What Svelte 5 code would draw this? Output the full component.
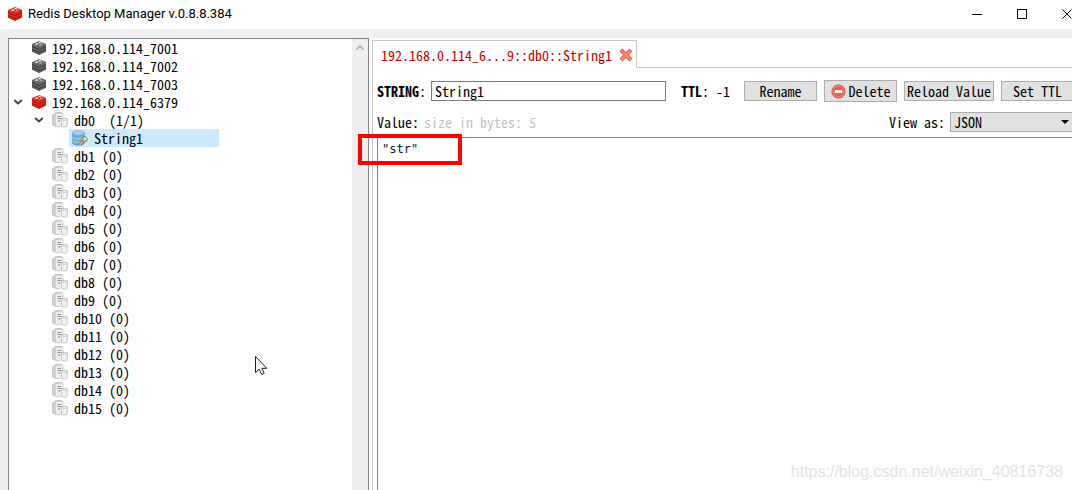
<script>
  const servers = ['192.168.0.114_7001', '192.168.0.114_7002', '192.168.0.114_7003'];
  const databases = Array.from({ length: 15 }, (_, i) => `db${i + 1} (0)`);
  let keyName = $state('String1');
  let value = $state('"str"');
  let view = $state('JSON');
</script>

{#snippet cube(dark, mid, light)}
  <svg class="icon" viewBox="0 0 16 16" aria-hidden="true">
    <path d="M1 4.500 8 7.500l7-3v7L8 15l-7-3.500z" fill={dark} />
    <path d="M1 4 8 1l7 3v2L8 9 1 6z" fill={mid} />
    <path d="M1 7.300 8 10.300l7-3v1.700L8 12 1 9zM1 10.300l7 3 7-3v1.200L8 14.700l-7-3.200z" fill={mid} />
    <path d="m3.500 4.300 2.500-1.200 2 1-2.500 1.200z" fill={light} />
    <path d="m7 2.500 1.800-.7.700.6 1.500.3-1.800.8z" fill="#fff" />
    <path d="m8.500 5.400 3-1.200" stroke={light} stroke-width=".8" />
  </svg>
{/snippet}

{#snippet dbIcon()}
  <svg class="icon" viewBox="0 0 16 16" aria-hidden="true">
    <path d="M.500 3 3.500.500H10l1 1V13l-6 2-4.500-2z" fill="#d0d0d0" stroke="#b0b0b0" stroke-width=".6" />
    <path d="M4 2.300 10.700 1.500V13.300L4 14.500z" fill="#eee" />
    <path d="M5.300 4.500h4M5.300 6.500h4" stroke="#8c8c8c" stroke-width=".9" />
    <path d="M6.500 8.300H8v1.500H6.500z" fill="#60b557" />
    <path d="m9.300 7.500.5 7q2.800 1.400 5.200 0l.5-7z" fill="#f8f8f8" stroke="#b2b2b2" stroke-width=".7" />
    <ellipse cx="12.400" cy="7.300" rx="3.200" ry="1" fill="#fff" stroke="#a4a4a4" stroke-width=".7" />
    <path d="M11.500 10v3.500M13.500 10v3.500" stroke="#dcdcdc" stroke-width=".7" />
  </svg>
{/snippet}

{#snippet chevron()}
  <svg class="chevron" viewBox="0 0 10 10" aria-hidden="true"><path d="m1.200 3 3.800 3.500L8.800 3" fill="none" stroke="#404040" stroke-width="1.800" /></svg>
{/snippet}

<div class="window">
  <header>
    {@render cube('#a51612', '#da2b24', '#ffd5cf')}
    <h1>Redis Desktop Manager v.0.8.8.384</h1>
    <div class="controls">
      <button aria-label="Minimize"><svg viewBox="0 0 12 12"><path d="M1 6.500h10" /></svg></button>
      <button aria-label="Maximize"><svg viewBox="0 0 12 12"><path d="M1.500 1.500h9v9h-9z" /></svg></button>
      <button aria-label="Close"><svg viewBox="0 0 12 12"><path d="m1.500 1.500 9 9m0-9-9 9" /></svg></button>
    </div>
  </header>

  <main>
    <aside>
      <ul>
        {#each servers as server}
          <li class="server"><span class="toggle"></span>{@render cube('#3d3d3d', '#666', '#ddd')}<span>{server}</span></li>
        {/each}
        <li class="server"><span class="toggle">{@render chevron()}</span>{@render cube('#b51612', '#da241f', '#ffd5cf')}<span>192.168.0.114_6379</span></li>
        <li class="database"><span class="toggle">{@render chevron()}</span>{@render dbIcon()}<span class="name">db0  (1/1)</span></li>
        <li class="key">
          <div class="selected">
            <svg class="icon" viewBox="0 0 16 16" aria-hidden="true">
              <path d="M.500 3v10c0 3 12 3 12 0V3z" fill="#6fabd8" stroke="#5790bd" stroke-width=".6" />
              <ellipse cx="6.500" cy="3" rx="6" ry="2.400" fill="#a8cfeb" stroke="#6ba3ce" stroke-width=".6" />
              <path d="M.700 7c0 2.500 11.600 2.500 11.600 0M.700 10.500c0 2.500 11.600 2.500 11.600 0" fill="none" stroke="#c2e0f4" stroke-width=".9" />
              <path d="m12 10.500-4.200 4" stroke="#8b8251" stroke-width="2.600" />
              <path d="m12 10.500-4.200 4" stroke="#c5b884" stroke-width="1.200" />
              <circle cx="12.700" cy="9.300" r="2.600" fill="#c5b884" stroke="#8b8251" stroke-width=".9" />
              <circle cx="13.500" cy="8.600" r=".9" fill="#fff" />
            </svg>
            <span>String1</span>
          </div>
        </li>
        {#each databases as database}
          <li class="database"><span class="toggle"></span>{@render dbIcon()}<span class="name">{database}</span></li>
        {/each}
      </ul>
      <div class="scrollbar"><svg viewBox="0 0 10 10" aria-hidden="true"><path d="m1.500 6.500 3.500-3.500 3.500 3.500" fill="none" stroke="#aaa" stroke-width="1.500" /></svg></div>
    </aside>

    <section>
      <div class="tabs">
        <div class="tab">
          <span>192.168.0.114_6...9::db0::String1</span>
          <button class="close-tab" aria-label="Close tab">
            <svg viewBox="0 0 14 14"><path d="m2 2 10 10m0-10L2 12" stroke="#da5540" stroke-width="4" /><path d="m2.500 2.500 9 9m0-9-9 9" stroke="#ff8c74" stroke-width="2.400" /></svg>
          </button>
        </div>
        <div class="tab-rest"></div>
      </div>
      <div class="content">
        <div class="row actions">
          <label for="key"><b>STRING</b>:</label>
          <input id="key" type="text" bind:value={keyName} />
          <span class="ttl"><b>TTL</b>: -1</span>
          <button>Rename</button>
          <button class="delete">
            <svg viewBox="0 0 16 16" aria-hidden="true"><circle cx="8" cy="8" r="7" fill="#eb5b4f" stroke="#bd4b42" /><circle cx="8" cy="8" r="5.900" fill="none" stroke="#ffaaa0" stroke-width=".8" /><path d="M4 6.500h8v3H4z" fill="#fff" /></svg>
            Delete
          </button>
          <button class="reload">Reload Value</button>
          <button>Set TTL</button>
        </div>
        <div class="row view">
          <label for="value">Value:</label>
          <span class="size">size in bytes: 5</span>
          <label class="view-label" for="view">View as:</label>
          <div class="select">
            <select id="view" bind:value={view}><option>JSON</option></select>
            <svg viewBox="0 0 8 4" aria-hidden="true"><path d="M0 0h8L4 4z" /></svg>
          </div>
        </div>
        <textarea id="value" spellcheck="false" bind:value></textarea>
      </div>
    </section>
  </main>

  <div class="highlight"></div>
  <svg class="pointer" viewBox="0 0 13 20" aria-hidden="true"><path d="M.500.500v16l3.700-3.300 2.500 5.300 2.500-1.200-2.400-5h5z" fill="#fff" stroke="#1a1a2a" /></svg>
  <div class="watermark">https://blog.csdn.net/weixin_40816738</div>
</div>

<style>
  :global(body) { margin: 0; }
  .window, .window * { box-sizing: border-box; }
  .window {
    position: relative;
    display: flex;
    flex-direction: column;
    height: 100vh;
    overflow: hidden;
    background: #fff;
    color: #000;
    font: 14px/18px "Noto Sans Mono CJK SC", "Liberation Mono", monospace;
  }
  button, input, select { font: inherit; color: inherit; border-radius: 0; margin: 0; }
  svg { display: block; flex: none; }
  .icon { width: 16px; height: 16px; }
  header { display: flex; align-items: center; flex: none; height: 29px; padding-left: 7px; padding-bottom: 2px; }
  h1 { margin: 0 auto 0 5px; font: 13px/18px Roboto, sans-serif; white-space: nowrap; }
  .controls { display: flex; gap: 33px; margin-right: -1px; }
  .controls button { padding: 0; border: 0; background: none; }
  .controls svg { width: 12px; height: 12px; fill: none; stroke: #000; }
  main { display: flex; flex: 1; min-height: 0; padding-left: 8px; border-top: 9px solid #efefef; background: linear-gradient(to right, #efefef 8px, #fff 8px); }
  aside { display: flex; flex: none; width: 361px; border: 1px solid #828790; border-bottom: 0; }
  ul { flex: 1; margin: 0; padding: 0; list-style: none; }
  li { display: flex; align-items: center; height: 18px; white-space: nowrap; }
  .name { white-space: pre; }
  .toggle { display: flex; width: 22px; padding-left: 4px; }
  .chevron { width: 10px; height: 10px; }
  .server .icon { margin-right: 5px; }
  .database { padding-left: 21px; }
  .database .toggle { width: 22px; }
  .database .icon { margin-right: 6px; }
  .key { padding-left: 60px; }
  .selected { display: flex; align-items: center; gap: 6px; width: 150px; height: 18px; padding-left: 3px; background: #cde8ff; }
  .scrollbar { width: 16px; padding: 4px 3px; background: #efefef; }
  .scrollbar svg { width: 10px; height: 10px; }
  section { display: flex; flex: 1; flex-direction: column; min-width: 0; margin-left: 3px; padding-top: 2px; }
  .tabs { display: flex; flex: none; height: 28px; }
  .tab { display: flex; align-items: center; gap: 7px; padding: 0 3px 0 8px; border: 1px solid #c8c8c8; border-bottom: 0; color: #c80000; white-space: nowrap; }
  .close-tab { padding: 0; border: 0; background: none; }
  .close-tab svg { width: 14px; height: 14px; }
  .tab-rest { flex: 1; border-bottom: 1px solid #c8c8c8; }
  .content { display: flex; flex: 1; flex-direction: column; min-height: 0; padding: 12px 0 0 4px; border-left: 1px solid #c8c8c8; }
  .row { display: flex; align-items: center; flex: none; white-space: nowrap; }
  .actions { height: 22px; gap: 7px; margin-right: -2px; }
  .actions label { width: 47px; }
  b { font-weight: 700; }
  input { flex: 1; min-width: 0; height: 20px; padding: 0 3px; border: 1px solid #7a7a7a; background: #fff; outline: 0; }
  .ttl { width: 49px; margin: 0 7px 0 8px; }
  .actions button { display: flex; align-items: center; justify-content: center; width: 73px; height: 20px; padding: 0; border: 1px solid #adadad; background: #e1e1e1; }
  .actions .delete { height: 22px; gap: 3px; }
  .delete svg { width: 15px; height: 15px; }
  .actions .reload { width: 90px; }
  .view { height: 20px; margin: 10px 0 5px; gap: 5px; }
  .size { color: #c3c3c3; }
  .view-label { margin-left: auto; }
  .select { position: relative; width: 124px; margin-right: -2px; }
  select { display: block; appearance: none; width: 100%; height: 20px; padding: 0 3px; border: 1px solid #adadad; background: #e1e1e1; outline: 0; }
  .select svg { position: absolute; right: 5px; top: 8px; width: 8px; height: 4px; pointer-events: none; }
  textarea { display: block; flex: 1; width: 100%; margin: 0; padding: 2px 4px; border: solid #828282; border-width: 1px 0 0 1px; border-radius: 0; resize: none; outline: 0; background: #fff; color: #10103c; font: 12px/18px "DejaVu Sans Mono", monospace; }
  .highlight { position: absolute; left: 358px; top: 134px; width: 104px; height: 31px; border: 4px solid #f00; pointer-events: none; }
  .pointer { position: absolute; left: 255px; top: 356px; width: 13px; height: 20px; }
  .watermark { position: absolute; right: 9px; bottom: 9px; color: #e4e4e4; font: 16px/18px "Liberation Sans", sans-serif; }
</style>
